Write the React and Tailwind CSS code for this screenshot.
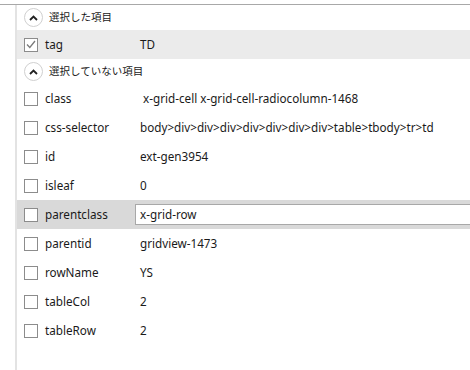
import React from 'react';

const selected = [{ key: 'tag', value: 'TD', checked: true }];

const unselected = [
  { key: 'class', value: ' x-grid-cell x-grid-cell-radiocolumn-1468' },
  { key: 'css-selector', value: 'body>div>div>div>div>div>div>div>table>tbody>tr>td' },
  { key: 'id', value: 'ext-gen3954' },
  { key: 'isleaf', value: '0' },
  { key: 'parentclass', value: 'x-grid-row', editing: true },
  { key: 'parentid', value: 'gridview-1473' },
  { key: 'rowName', value: 'YS' },
  { key: 'tableCol', value: '2' },
  { key: 'tableRow', value: '2' },
];

const GroupHeader = ({ title }) => (
  <div className="h-[25px] flex items-center pl-[7px] gap-[6px]">
    <div className="w-[19px] h-[19px] rounded-full border border-[#d0d0d0] bg-white flex items-center justify-center">
      <svg width="9" height="6" viewBox="0 0 9 6">
        <path d="M1 5 L4.5 1.5 L8 5" fill="none" stroke="#222" strokeWidth="1.8" />
      </svg>
    </div>
    <span className="text-[10.5px] text-[#1a1a1a]">{title}</span>
  </div>
);

const Checkbox = ({ checked }) => (
  <div className="w-[14px] h-[14px] shrink-0 border border-[#8c8c8c] bg-white flex items-center justify-center">
    {checked && (
      <svg width="10" height="9" viewBox="0 0 10 9">
        <path d="M1 4.5 L3.8 7.5 L9 1" fill="none" stroke="#7a7a7a" strokeWidth="1.3" />
      </svg>
    )}
  </div>
);

const Row = ({ item }) => (
  <div
    className={`h-[29px] flex items-center pl-[7px] ${
      item.checked ? 'bg-[#ebebeb]' : item.editing ? 'bg-[#d9d9d9]' : ''
    }`}
  >
    <Checkbox checked={item.checked} />
    <span className="ml-[7px] w-[95px] shrink-0 text-[11.7px] text-[#1a1a1a]">{item.key}</span>
    {item.editing ? (
      <div className="w-[400px] shrink-0 h-[21px] ml-[-5px] border border-[#a8a8a8] bg-white flex items-center pl-[4px] text-[11.7px] text-[#1a1a1a]">
        {item.value}
      </div>
    ) : (
      <span className="text-[11.7px] text-[#1a1a1a] whitespace-pre">{item.value}</span>
    )}
  </div>
);

export default function App() {
  return (
    <div
      className="w-[470px] h-[370px] bg-white overflow-hidden pt-[4px]"
      style={{ fontFamily: '"Noto Sans", "Noto Sans CJK JP", sans-serif' }}
    >
      <div className="h-full border-t border-[#a8a8a8] flex">
        <div className="w-[15px] shrink-0" />
        <div className="w-[2px] shrink-0 bg-[#e3e3e3]" />
        <div className="flex-1 min-w-0 overflow-hidden flex flex-col">
          <GroupHeader title="選択した項目" />
          {selected.map((it) => (
            <Row key={it.key} item={it} />
          ))}
          <GroupHeader title="選択していない項目" />
          {unselected.map((it) => (
            <Row key={it.key} item={it} />
          ))}
        </div>
      </div>
    </div>
  );
}
